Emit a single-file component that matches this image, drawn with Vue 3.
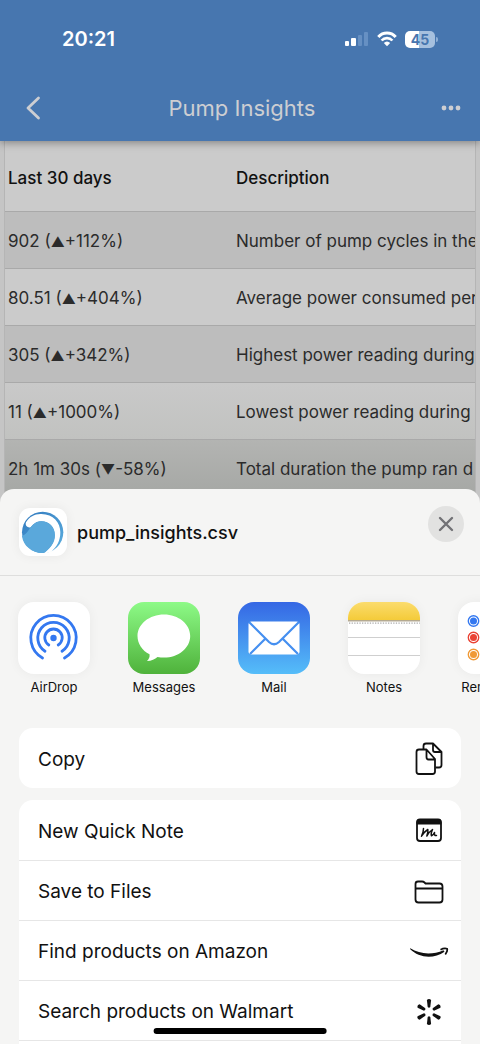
<script setup>
const rows = [
  { value: '902', mark: '▲', change: '+112%', text: 'Number of pump cycles in the' },
  { value: '80.51', mark: '▲', change: '+404%', text: 'Average power consumed per' },
  { value: '305', mark: '▲', change: '+342%', text: 'Highest power reading during' },
  { value: '11', mark: '▲', change: '+1000%', text: 'Lowest power reading during' },
  { value: '2h 1m 30s', mark: '▼', change: '-58%', text: 'Total duration the pump ran d' },
]
</script>

<template>
  <div class="screen">
    <header class="top">
      <div class="status">
        <time class="clock">20:21</time>
        <div class="indicators">
          <svg class="signal" viewBox="0 0 24 16" aria-hidden="true">
            <rect x="0" y="10" width="4" height="5" rx="1" fill="#fff" />
            <rect x="6" y="7" width="5" height="8" rx="1" fill="#fff" />
            <rect x="13" y="4" width="4" height="11" rx="1" fill="#6690c3" />
            <rect x="19" y="1" width="4" height="14" rx="1" fill="#6690c3" />
          </svg>
          <svg class="wifi" viewBox="0 0 20 16" fill="none" stroke="#fff" aria-hidden="true">
            <path d="M1.3 6 C6 .8 14 .8 18.700 6" stroke-width="3" />
            <path d="M4.600 9.500 C7.500 6.300 12.500 6.300 15.400 9.500" stroke-width="2.600" />
            <path d="M6.800 12 Q10 9 13.200 12 L10 15.300Z" fill="#fff" stroke="none" />
          </svg>
          <div class="battery">45</div>
        </div>
      </div>
      <nav class="bar">
        <button class="nav-btn" aria-label="Back">
          <svg viewBox="0 0 22 24" fill="none" stroke="#cdced2" stroke-width="2.800" stroke-linecap="round" stroke-linejoin="round"><path d="M16.500 2 L6 12 L16.500 22" /></svg>
        </button>
        <h1>Pump Insights</h1>
        <button class="nav-btn" aria-label="More">
          <svg viewBox="0 0 22 24" fill="#cdced2"><circle cx="4" cy="12" r="2.400" /><circle cx="11" cy="12" r="2.400" /><circle cx="18" cy="12" r="2.400" /></svg>
        </button>
      </nav>
    </header>

    <main class="report">
      <div class="table-wrap">
        <table>
          <thead>
            <tr><th scope="col">Last 30 days</th><th scope="col">Description</th></tr>
          </thead>
          <tbody>
            <tr v-for="row in rows" :key="row.value">
              <td>{{ row.value }} (<span class="mark">{{ row.mark }}</span>{{ row.change }})</td>
              <td>{{ row.text }}</td>
            </tr>
          </tbody>
        </table>
      </div>
    </main>

    <section class="sheet" aria-label="Share">
      <div class="file">
        <div class="file-icon">
          <svg viewBox="57 69 144 144" aria-hidden="true">
            <defs>
              <linearGradient id="ring" x1="0" x2="1" y1="0" y2="1"><stop offset="0" stop-color="#2f78bd" /><stop offset="1" stop-color="#5eb0e0" /></linearGradient>
            </defs>
            <circle cx="128" cy="142" r="62" fill="url(#ring)" />
            <path d="M78 112 C88 95 105 86 124 87 C160 88 181 112 181 142 C181 168 170 186 154 200 L128 208 C150 192 164 172 164 150 C164 125 146 109 124 109 C108 109 100 118 92 127 C84 130 74 122 78 112Z" fill="#fff" />
            <path d="M66 153 C78 150 86 135 92 127 C100 117 110 109 124 109 C148 109 165 127 165 151 C165 173 150 194 128 204 C96 204 69 182 66 153Z" fill="#5aa8db" />
          </svg>
        </div>
        <h2>pump_insights.csv</h2>
        <button class="close" aria-label="Close">
          <svg viewBox="0 0 36 36" stroke="#727276" stroke-width="2.400" stroke-linecap="round"><path d="M12 12 L24 24 M24 12 L12 24" /></svg>
        </button>
      </div>

      <div class="apps">
        <button class="app">
          <svg class="app-icon white" viewBox="0 0 72 72" fill="none" stroke="#3478f0" stroke-width="2.800" stroke-linecap="round">
            <circle cx="35.500" cy="36" r="3.200" fill="#3478f0" stroke="none" />
            <path d="M30.800 43 A8.700 8.700 0 1 1 40.200 43" />
            <path d="M27 49.200 A15.700 15.700 0 1 1 44 49.200" />
            <path d="M24.500 56 A22.700 22.700 0 1 1 46.500 56" />
          </svg>
          <span>AirDrop</span>
        </button>
        <button class="app">
          <svg class="app-icon green" viewBox="0 0 72 72">
            <path d="M36 12.500 C21.500 12.500 9.500 22 9.500 34 C9.500 41.500 14 48.500 21.500 52.300 C22 55 21 57 19 59 C23.500 59 27 57 29.500 55 C31.500 55.400 34 55.600 36 55.600 C50.500 55.600 62.200 46 62.200 34 C62.200 22 50.500 12.500 36 12.500Z" fill="#fff" />
          </svg>
          <span>Messages</span>
        </button>
        <button class="app">
          <svg class="app-icon blue" viewBox="0 0 72 72" fill="none">
            <rect x="10.500" y="19.500" width="51" height="33" rx="3" fill="#fff" />
            <path d="M11 20 L31 40 Q36 44.500 41 40 L61 20 M12 52 L27 37 M60 52 L45 37" stroke="#458ff0" stroke-width="2.200" />
          </svg>
          <span>Mail</span>
        </button>
        <button class="app">
          <svg class="app-icon white" viewBox="0 0 72 72">
            <defs>
              <linearGradient id="pad" x1="0" x2="0" y1="0" y2="1"><stop offset="0" stop-color="#fbdc6d" /><stop offset="1" stop-color="#f4cb39" /></linearGradient>
            </defs>
            <rect width="72" height="18" fill="url(#pad)" />
            <path d="M0 18.700 H72" stroke="#b5aa91" stroke-width="1.500" />
            <path d="M1 21.200 H72" stroke="#aaa" stroke-width="1.300" stroke-dasharray="1.300 1.300" />
            <path d="M0 35.500 H72 M0 53.500 H72" stroke="#cfcfcf" />
          </svg>
          <span>Notes</span>
        </button>
        <button class="app">
          <svg class="app-icon white" viewBox="0 0 72 72" fill="none" stroke-width="1.400">
            <circle cx="15.500" cy="19" r="5.200" stroke="#3478f0" /><circle cx="15.500" cy="19" r="3.500" fill="#3478f0" />
            <circle cx="15.500" cy="35.500" r="5.200" stroke="#ea4335" /><circle cx="15.500" cy="35.500" r="3.500" fill="#ea4335" />
            <circle cx="15.500" cy="52.500" r="5.200" stroke="#f09a37" /><circle cx="15.500" cy="52.500" r="3.500" fill="#f09a37" />
            <path d="M27 27.500 H72 M27 44 H72" stroke="#ddd" />
          </svg>
          <span>Reminders</span>
        </button>
      </div>

      <div class="card">
        <button class="action">
          <span>Copy</span>
          <svg viewBox="0 0 40 40" fill="none" stroke="#111" stroke-width="1.800" stroke-linejoin="round">
            <path d="M14.500 10 V7 Q14.500 4.500 17 4.500 H24 L32.500 13 V26 Q32.500 28.500 30 28.500 H26.500 M24 4.500 V11 Q24 13 26 13 H32.500" />
            <path d="M17.500 10.500 H10 Q7.500 10.500 7.500 13 V32.500 Q7.500 35 10 35 H23.500 Q26 35 26 32.500 V20Z M17.500 10.500 V18 Q17.500 20.500 19.500 20.500 H26" />
          </svg>
        </button>
      </div>

      <div class="card">
        <button class="action">
          <span>New Quick Note</span>
          <svg viewBox="0 0 40 40" fill="none" stroke="#111" stroke-width="1.800" stroke-linecap="round" stroke-linejoin="round">
            <rect x="8" y="8.500" width="24" height="21.500" rx="3" />
            <path d="M8.500 12.500 V11 Q8.500 9 11 9 H29 Q31.500 9 31.500 11 V12.500Z" fill="#111" />
            <path d="M14.500 17.500 Q14.500 21 12.500 25.200 Q15.500 20.500 18.800 18.500 Q19.500 21 17.800 25 Q20.500 20.500 23.500 18.500 Q21.500 23 22.500 24.800 Q24.500 24 25.500 21.500 Q25 25 27.500 24.500" stroke-width="1.500" />
          </svg>
        </button>
        <button class="action">
          <span>Save to Files</span>
          <svg viewBox="0 0 40 40" fill="none" stroke="#111" stroke-width="1.800" stroke-linejoin="round">
            <path d="M6.500 16 V12 Q6.500 9.500 9 9.500 H13 Q14.500 9.500 15.500 10.500 L16.500 11.500 H30.500 Q33.500 11.500 33.500 14.500 V27.500 Q33.500 30.500 30.500 30.500 H9.500 Q6.500 30.500 6.500 27.500Z M6.500 16.500 H33.500" />
          </svg>
        </button>
        <button class="action">
          <span>Find products on Amazon</span>
          <svg viewBox="0 0 40 40">
            <path d="M1.300 16.300 C11 22.500 23.500 23 34.500 18.200 L35.500 19.700 C24.500 27.300 10 26 1 17Z" fill="#111" />
            <path d="M31.500 17.800 Q35 15.800 38.200 16.800 Q38.800 19 36.300 22.500" fill="none" stroke="#111" stroke-width="1.700" />
          </svg>
        </button>
        <button class="action">
          <span>Search products on Walmart</span>
          <svg viewBox="0 0 40 40" fill="#111">
            <path v-for="a in 6" :key="a" :transform="`rotate(${a * 60} 20 20)`" d="M17.900 8 Q20 6 22.100 8 L21.300 15 Q20 16.500 18.700 15Z" />
          </svg>
        </button>
        <div class="action next"></div>
      </div>
    </section>
    <div class="home"></div>
  </div>
</template>

<style>
body {
  background: #f5f5f4;
}
</style>

<style scoped>
.screen {
  position: relative;
  height: 100vh;
  overflow: hidden;
  font-family: Inter, "Liberation Sans", sans-serif;
  color: #111;
  background: #c7c7c7;
}
button {
  border: 0;
  padding: 0;
  margin: 0;
  background: none;
  font: inherit;
  color: inherit;
}
svg {
  display: block;
}
h1,
h2 {
  margin: 0;
}
.top {
  position: relative;
  background: #4776af;
  color: #cdced2;
  box-shadow: 0 2px 8px rgba(0, 0, 0, 0.35);
}
.status {
  display: flex;
  align-items: center;
  justify-content: space-between;
  height: 78px;
  padding: 0 45px 0 62px;
  box-sizing: border-box;
  color: #fff;
}
.clock {
  font-size: 20px;
  font-weight: 600;
}
.indicators {
  display: flex;
  align-items: center;
  gap: 8px;
}
.signal {
  width: 24px;
  height: 16px;
}
.wifi {
  width: 20px;
  height: 16px;
}
.battery {
  position: relative;
  width: 30px;
  height: 17px;
  border-radius: 5px;
  background: linear-gradient(90deg, #fff 46%, #a6c0de 46%);
  color: #4776af;
  font-size: 14px;
  font-weight: 700;
  line-height: 17px;
  text-align: center;
}
.battery::after {
  content: "";
  position: absolute;
  left: 31px;
  top: 6px;
  width: 2px;
  height: 5px;
  border-radius: 0 2px 2px 0;
  background: #8eafd6;
}
.bar {
  display: flex;
  align-items: center;
  justify-content: space-between;
  height: 63px;
  padding: 0 18px 4px 22px;
  box-sizing: border-box;
}
.bar h1 {
  font-size: 22px;
  font-weight: 400;
}
.nav-btn svg {
  width: 22px;
  height: 24px;
}
.table-wrap {
  margin: 0 4px;
  border: solid #b5b5b5;
  border-width: 0 1px;
  overflow: hidden;
}
.report {
  background: #c5c5c5;
}
table {
  border-collapse: separate;
  border-spacing: 0;
  table-layout: fixed;
  width: 100%;
  font-size: 17px;
  white-space: nowrap;
}
th,
td {
  box-sizing: border-box;
  height: 57px;
  padding: 1px 0 0 3px;
  border-bottom: 1px solid #a9a9a9;
  text-align: left;
  color: #2b2b2b;
}
th {
  height: 71px;
  padding-top: 4px;
  font-weight: 500;
  color: #111;
}
th:first-child {
  width: 228px;
}
.mark {
  font-size: 14px;
  line-height: 14px;
}
tr {
  background: #cbcbcb;
}
tbody tr:nth-child(odd) {
  background: #bdbdbd;
}
tbody tr:nth-child(4) {
  background: linear-gradient(#c9c9c9, #c1c2c0);
}
tbody tr:nth-child(5) {
  background: linear-gradient(#b3b4b2, #a5a7a4);
}
.sheet {
  position: relative;
  margin-top: -8px;
  border-radius: 14px 14px 0 0;
  background: #f5f5f4;
}
.file {
  display: flex;
  align-items: center;
  height: 87px;
  padding: 0 16px 0 19px;
  box-sizing: border-box;
  border-bottom: 1px solid #dededd;
}
.file-icon {
  width: 48px;
  height: 48px;
  border-radius: 11px;
  background: #fff;
  box-shadow: 0 0 12px rgba(0, 0, 0, 0.06);
}
.file h2 {
  flex: 1;
  margin-left: 10px;
  font-size: 18px;
  font-weight: 500;
}
.close {
  width: 36px;
  height: 36px;
  margin-bottom: 16px;
  border-radius: 50%;
  background: #e2e2e1;
}
.apps {
  display: flex;
  gap: 38px;
  padding: 26px 0 0 18px;
  height: 152px;
  box-sizing: border-box;
  overflow: hidden;
}
.app {
  display: flex;
  flex: none;
  flex-direction: column;
  align-items: center;
  gap: 4px;
  width: 72px;
  font-size: 13px;
  line-height: 18px;
}
.app-icon {
  width: 72px;
  height: 72px;
  border-radius: 16px;
}
.white {
  background: #fff;
  box-shadow: 0 0 12px rgba(0, 0, 0, 0.05);
}
.green {
  background: linear-gradient(#8dfa87, #4fb23b);
}
.blue {
  background: linear-gradient(#3567e4, #55bdf9);
}
.card {
  margin: 0 19px 12px;
  border-radius: 14px;
  background: #fff;
  overflow: hidden;
}
.action {
  display: flex;
  align-items: center;
  justify-content: space-between;
  width: 100%;
  height: 60px;
  padding: 2px 12px 0 19px;
  box-sizing: border-box;
  font-size: 19px;
  text-align: left;
}
.action + .action {
  border-top: 1px solid #e6e6e6;
}
.action svg {
  width: 40px;
  height: 40px;
}
.home {
  position: absolute;
  left: 50%;
  bottom: 10px;
  width: 36%;
  height: 6px;
  border-radius: 3px;
  background: #000;
  transform: translateX(-50%);
}
</style>
